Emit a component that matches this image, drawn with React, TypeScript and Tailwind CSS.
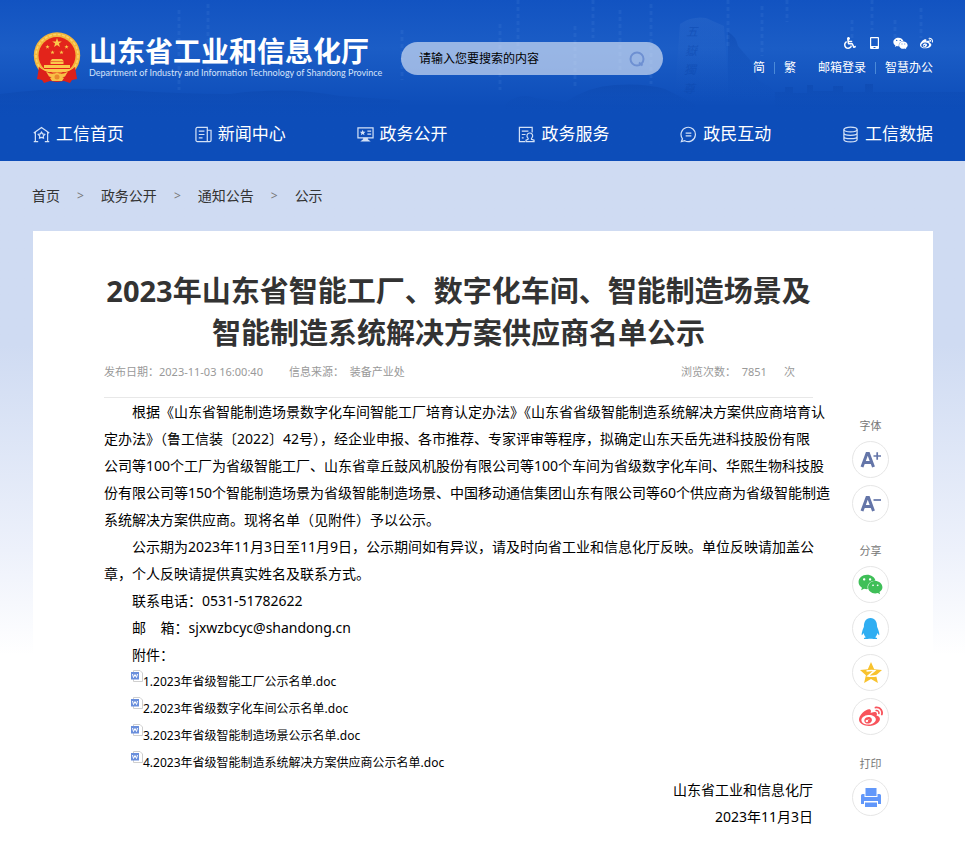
import React from 'react';
import { FaWheelchair, FaWeixin, FaWeibo, FaQq } from 'react-icons/fa';

const icon = {
  width: 17,
  height: 17,
  viewBox: '0 0 18 18',
  fill: 'none',
  stroke: 'currentColor',
  strokeWidth: 1.3,
  className: 'shrink-0 text-[#d3e1f7]',
};

const navItems = [
  {
    label: '工信首页',
    icon: (
      <svg {...icon}>
        <path d="M.8 7.500 9 1.500l8.200 6M2.500 6.500V16.500H.8M15.500 6.500V16.500h1.700M2.500 16.500h3M12.500 16.500h3" />
        <path d="m9 6.500 1.200 1.900 2.200.5-1.500 1.700.2 2.300L9 12.100l-2.100.8.2-2.300-1.500-1.700 2.200-.5z" />
      </svg>
    ),
  },
  {
    label: '新闻中心',
    icon: (
      <svg {...icon}>
        <path d="M2.500 1.500h10.500v15H2.500a1.500 1.500 0 0 1-1.500-1.500V3a1.500 1.500 0 0 1 1.500-1.500zM13 4.500h4V15a1.500 1.500 0 0 1-1.500 1.500H13M4 5.500h6M4 9h6M4 12.500h4" />
      </svg>
    ),
  },
  {
    label: '政务公开',
    icon: (
      <svg {...icon}>
        <path d="M1 2h16v10.500H1zM11 5.500h4M11 8.500h4" />
        <path d="m6 4 .9 2 2.100.2-1.600 1.400.5 2.100L6 8.600l-1.900 1.100.5-2.100L3 6.200 5.100 6z" fill="currentColor" stroke="none" />
        <path d="M6.500 12.500h5V14l3 2.500h-11l3-2.500z" fill="currentColor" stroke="none" />
      </svg>
    ),
  },
  {
    label: '政务服务',
    icon: (
      <svg {...icon}>
        <path d="M7.500 16.500H1.500V1.500h13.500V7M4 5.500h7M4 9h4M4 12.500h2" />
        <path d="M10.700 12.800a3 3 0 1 1 3.600 0M10.700 12.800v1.200L8.500 15v1.500h8.500V15l-2.700-1v-1.200" />
      </svg>
    ),
  },
  {
    label: '政民互动',
    icon: (
      <svg {...icon}>
        <path d="M1.500 16.500 2.600 13.500A7.600 7.600 0 1 1 5 15.600L1.500 16.500zM6 7.500h6M6 10.500h6" />
      </svg>
    ),
  },
  {
    label: '工信数据',
    icon: (
      <svg {...icon}>
        <ellipse cx="9" cy="3.800" rx="7" ry="2.500" />
        <path d="M2 3.800v10.500C2 15.700 5 16.800 9 16.800s7-1.100 7-2.500V3.800M2 7.500C2 8.900 5 9.900 9 9.900s7-1 7-2.400M2 11C2 12.400 5 13.400 9 13.400s7-1 7-2.400" />
      </svg>
    ),
  },
];

const crumbs = ['首页', '政务公开', '通知公告', '公示'];

const files = [
  '1.2023年省级智能工厂公示名单.doc',
  '2.2023年省级数字化车间公示名单.doc',
  '3.2023年省级智能制造场景公示名单.doc',
  '4.2023年省级智能制造系统解决方案供应商公示名单.doc',
];

function Emblem() {
  const star = 'M0-5 1.200-1.600H4.800L1.900.6 3 4 0 1.900-3 4-1.900.6-4.800-1.600H-1.200z';
  return (
    <svg width="48" height="51" viewBox="0 0 48 51" className="shrink-0">
      <circle cx="24" cy="23.500" r="23.200" fill="#f5b63c" />
      <circle cx="24" cy="23.500" r="21" fill="none" stroke="#fbd468" strokeWidth="1.500" strokeDasharray="3 1.500" />
      <circle cx="24" cy="23.500" r="18.500" fill="#e3241b" />
      <g fill="#fbc94b">
        <path d={star} transform="translate(24 11)" />
        <path d={star} transform="translate(14.500 15) scale(.45)" />
        <path d={star} transform="translate(33.500 15) scale(.45)" />
        <path d={star} transform="translate(19.500 20.500) scale(.45)" />
        <path d={star} transform="translate(28.500 20.500) scale(.45)" />
        <path d="M19 27h10l2 2.500H17zM17.500 30h13v2h-13zM11 33h26v3H11zM7.500 37h33l-4 3.500h-25z" />
      </g>
      <path d="M6 35q7 6 12 5l6 4 6-4q5 1 12-5l2 12-5 1-2 3-6-2-7 1-7-1-6 2-2-3-5-1z" fill="#dc201a" />
      <path d="M13 39.500q6 4 11 1 5 3 11-1l-3 5q-4 2-8-1-4 3-8 1zM17 46l7-4 7 4-2 3H19z" fill="#f8c046" />
      <circle cx="24" cy="45" r="2.500" fill="#e98a2c" />
    </svg>
  );
}

// mountains, carved rock and falling code behind the header
function Skyline() {
  return (
    <svg className="absolute inset-0 h-full w-full" viewBox="0 0 965 161" preserveAspectRatio="xMidYMid slice" aria-hidden="true">
      <defs>
        <linearGradient id="fade" x1="0" y1="0" x2="0" y2="1">
          <stop offset="0" stopColor="#0a43a8" stopOpacity=".4" />
          <stop offset="1" stopColor="#0d4db9" stopOpacity="0" />
        </linearGradient>
        <linearGradient id="rock" x1="0" y1="0" x2="0" y2="1">
          <stop offset="0" stopColor="#4a82d6" stopOpacity=".2" />
          <stop offset="1" stopColor="#1552bd" stopOpacity="0" />
        </linearGradient>
      </defs>
      <path d="M505 104q15-12 30-6l30 4q25-16 50-17 30-2 50 4l30 15v10H505z" fill="url(#fade)" />
      <path d="M0 94q60-8 120-4t110 4q60-8 110 2l60 4v20H0z" fill="url(#fade)" />
      <path d="M680 24q12-8 26-6l18 8 6 78h-56z" fill="url(#rock)" />
      <path d="M728 32q8 4 10 14l12 14 8 20 14 8 10 16h-54z" fill="url(#fade)" />
      <path d="M775 92h10v-5h8v6h14v-8h6v6h20v-5h10v6h22v-8h8v8h97v22H775z" fill="url(#fade)" />
      <g fill="#0c47ad" fillOpacity=".5" fontSize="12" fontStyle="italic" className='font-["Noto_Sans_CJK_SC",sans-serif]'>
        <text x="686" y="36">五</text>
        <text x="685" y="55">嶽</text>
        <text x="684" y="74">獨</text>
        <text x="683" y="93">尊</text>
      </g>
      <g stroke="#5f97e6" strokeWidth="3" strokeOpacity=".14" strokeDasharray="4 3">
        <path d="M179 10v80M208 4v70M402 30v50M500 24v66M518 0v60M575 26v60M593 0v38M620 10v60M651 4v80M728 0v46M762 6v50M787 0v22M852 20v20M872 0v30M895 20v20M921 8v30" />
      </g>
    </svg>
  );
}

function Round({ label, children }: { label: string; children: React.ReactNode }) {
  return (
    <button aria-label={label} className="flex size-[37px] items-center justify-center rounded-full border border-[#e6e6e6] bg-white">
      {children}
    </button>
  );
}

function Header() {
  return (
    <header className="relative bg-linear-to-b from-[#1253c1] via-[#1b5dc6] via-30% to-[#0d4db9] to-66% text-white">
      <Skyline />
      <div className="relative flex h-[107px] items-start pr-8 pl-[33px]">
        <a href="#" className="mt-8 flex gap-2">
          <Emblem />
          <div className="w-[284px] whitespace-nowrap">
            <div className='font-["Noto_Sans_CJK_SC",sans-serif] text-[28px]/[36px] font-bold'>
              山东省工业和信息化厅
            </div>
            <div className='font-["Lato",sans-serif] text-[9px]/[10px] text-[#d5e3fa]'>
              Department of Industry and Information Technology of Shandong Province
            </div>
          </div>
        </a>
        <form className="mt-[42px] ml-7 flex h-[33px] w-[262px] items-center rounded-full bg-white/55 pr-4 pl-[18px]">
          <input
            aria-label="搜索"
            placeholder="请输入您要搜索的内容"
            className="min-w-0 flex-1 bg-transparent text-xs text-black outline-none placeholder:text-black"
          />
          <button type="button" aria-label="搜索" className="text-[#6e90d2]">
            <svg width="20" height="20" viewBox="0 0 20 20" fill="none" stroke="currentColor" strokeWidth="2">
              <circle cx="10" cy="10" r="6.500" />
              <path d="m12 13.500 3.500 3" />
            </svg>
          </button>
        </form>
        <div className="mt-[35px] ml-auto flex flex-col items-end whitespace-nowrap">
          <div className="flex h-4 items-center gap-3">
            <a href="#" aria-label="无障碍"><FaWheelchair size={12} /></a>
            <a href="#" aria-label="手机版">
              <svg width="13" height="13" viewBox="0 0 13 13">
                <path fillRule="evenodd" fill="currentColor" d="M3 0h7a1 1 0 0 1 1 1v10a1 1 0 0 1-1 1H3a1 1 0 0 1-1-1V1a1 1 0 0 1 1-1zm.2 1.200v7.800h6.600V1.200zM5.500 10v1h2v-1z" />
              </svg>
            </a>
            <a href="#" aria-label="微信"><FaWeixin size={15} /></a>
            <a href="#" aria-label="微博"><FaWeibo size={13} /></a>
          </div>
          <div className="mt-2 flex items-center text-xs/[18px]">
            <a href="#">简</a>
            <i className="mx-[9px] h-3 w-px bg-[#4b8ad8]" />
            <a href="#" className="mr-[22px]">繁</a>
            <a href="#">邮箱登录</a>
            <i className="mx-[9px] h-3 w-px bg-[#4b8ad8]" />
            <a href="#">智慧办公</a>
          </div>
        </div>
      </div>
      <nav className="relative flex h-[54px] justify-between pr-8 pl-[33px]">
        {navItems.map((item) => (
          <a key={item.label} href="#" className="flex items-center gap-[6px] text-[17px] whitespace-nowrap">
            {item.icon}
            {item.label}
          </a>
        ))}
      </nav>
    </header>
  );
}

function Tools() {
  return (
    <aside className="flex w-[37px] shrink-0 flex-col items-center gap-[7px] pt-[187px] text-[11px]/[16px] text-[#777]">
      <span>字体</span>
      <Round label="放大字体">
        <svg width="22" height="18" viewBox="0 0 22 18" fill="none" stroke="#6475a8" strokeWidth="3">
          <path d="M2 16 7 2.500h1.500L13.500 16M4 11.500h7.500" />
          <path d="M13.500 5H21M17.200 1.200v7.600" strokeWidth="1.700" />
        </svg>
      </Round>
      <Round label="缩小字体">
        <svg width="22" height="18" viewBox="0 0 22 18" fill="none" stroke="#6475a8" strokeWidth="3">
          <path d="M2 16 7 2.500h1.500L13.500 16M4 11.500h7.500" />
          <path d="M13.500 5H21" strokeWidth="1.700" />
        </svg>
      </Round>
      <span className="mt-[14px]">分享</span>
      <Round label="微信"><FaWeixin size={25} color="#3fbf58" /></Round>
      <Round label="QQ"><FaQq size={21} color="#30aef2" /></Round>
      <Round label="QQ空间">
        <svg width="24" height="24" viewBox="0 0 24 24">
          <path d="m12 1 3.200 7.300 7.800.8-5.900 5.200 1.800 7.700L12 18l-6.900 4 1.800-7.700L1 9.100l7.800-.8z" fill="#f8c22d" />
          <path d="M7.500 10q4-.8 8-.3l-6.500 5.300q4 .8 9-.4" fill="none" stroke="#fff" strokeWidth="1.600" />
        </svg>
      </Round>
      <Round label="微博"><FaWeibo size={24} color="#f8535b" /></Round>
      <span className="mt-[14px]">打印</span>
      <Round label="打印">
        <svg width="22" height="20" viewBox="0 0 22 20" fill="#6197fa">
          <path d="M5.500 0h11v8h-11zM2.500 6h2v3h13V6h2A1.500 1.500 0 0 1 21 7.500V16h-3v-3H4v3H1V7.500A1.500 1.500 0 0 1 2.500 6zM5 14.500h12V19H5z" />
        </svg>
      </Round>
    </aside>
  );
}

export default function App() {
  return (
    <div className='min-h-screen bg-linear-to-b from-[#cfdbf2] from-[345px] via-[#edf1fb] via-[550px] to-white to-[655px] font-["Noto_Sans","Noto_Sans_CJK_SC",sans-serif]'>
      <Header />
      <div className="flex h-[70px] items-center px-8 text-sm text-[#333]">
        {crumbs.map((c, i) => (
          <React.Fragment key={c}>
            {i > 0 && <span className="mx-[17px] text-xs text-[#777]">&gt;</span>}
            <a href="#">{c}</a>
          </React.Fragment>
        ))}
      </div>
      <main className="mr-8 ml-[33px] flex justify-between bg-white pr-11 pb-5 pl-[71px]">
        <article className="w-[709px]">
          <h1 className="pt-[39px] text-center text-[29px]/[42px] font-bold whitespace-nowrap text-[#333]">
            2023年山东省智能工厂、数字化车间、智能制造场景及
            <br />
            智能制造系统解决方案供应商名单公示
          </h1>
          <div className="mt-[7px] flex h-[37px] gap-[26px] border-b border-[#e8e8e8] pt-[2px] text-[11px]/[18px] text-[#999]">
            <span>发布日期：2023-11-03 16:00:40</span>
            <span>信息来源：&nbsp; 装备产业处</span>
            <span className="mr-[18px] ml-auto">浏览次数：&nbsp; 7851 &nbsp; &nbsp; &nbsp;次</span>
          </div>
          <div className="text-sm/[27px] whitespace-nowrap text-black">
            <p className="indent-7">
              根据《山东省智能制造场景数字化车间智能工厂培育认定办法》《山东省省级智能制造系统解决方案供应商培育认
              <br />
              定办法》（鲁工信装〔2022〕42号），经企业申报、各市推荐、专家评审等程序，拟确定山东天岳先进科技股份有限
              <br />
              公司等100个工厂为省级智能工厂、山东省章丘鼓风机股份有限公司等100个车间为省级数字化车间、华熙生物科技股
              <br />
              份有限公司等150个智能制造场景为省级智能制造场景、中国移动通信集团山东有限公司等60个供应商为省级智能制造
              <br />
              系统解决方案供应商。现将名单（见附件）予以公示。
            </p>
            <p className="indent-7">
              公示期为2023年11月3日至11月9日，公示期间如有异议，请及时向省工业和信息化厅反映。单位反映请加盖公
              <br />
              章，个人反映请提供真实姓名及联系方式。
            </p>
            <p className="indent-7">联系电话：0531-51782622</p>
            <p className="indent-7">邮&nbsp; &nbsp; 箱：sjxwzbcyc@shandong.cn</p>
            <p className="indent-7">附件：</p>
            <ul className="pl-[27px] text-xs/[27px]">
              {files.map((f) => (
                <li key={f} className="flex">
                  <svg width="12" height="12" viewBox="0 0 12 12" className="mt-[2px] shrink-0">
                    <path d="M2.500.5h6.500l2.500 2.500v8.500h-9z" fill="#fff" stroke="#cfcfcf" />
                    <path d="M0 2h8v7.500H0z" fill="#6a8fdc" />
                    <path d="m1.500 4 1 3.500L4 4.500l1.500 3 1-3.500" fill="none" stroke="#fff" />
                  </svg>
                  <a href="#">{f}</a>
                </li>
              ))}
            </ul>
            <div className="text-right">
              <p>山东省工业和信息化厅</p>
              <p>2023年11月3日</p>
            </div>
          </div>
        </article>
        <Tools />
      </main>
    </div>
  );
}
